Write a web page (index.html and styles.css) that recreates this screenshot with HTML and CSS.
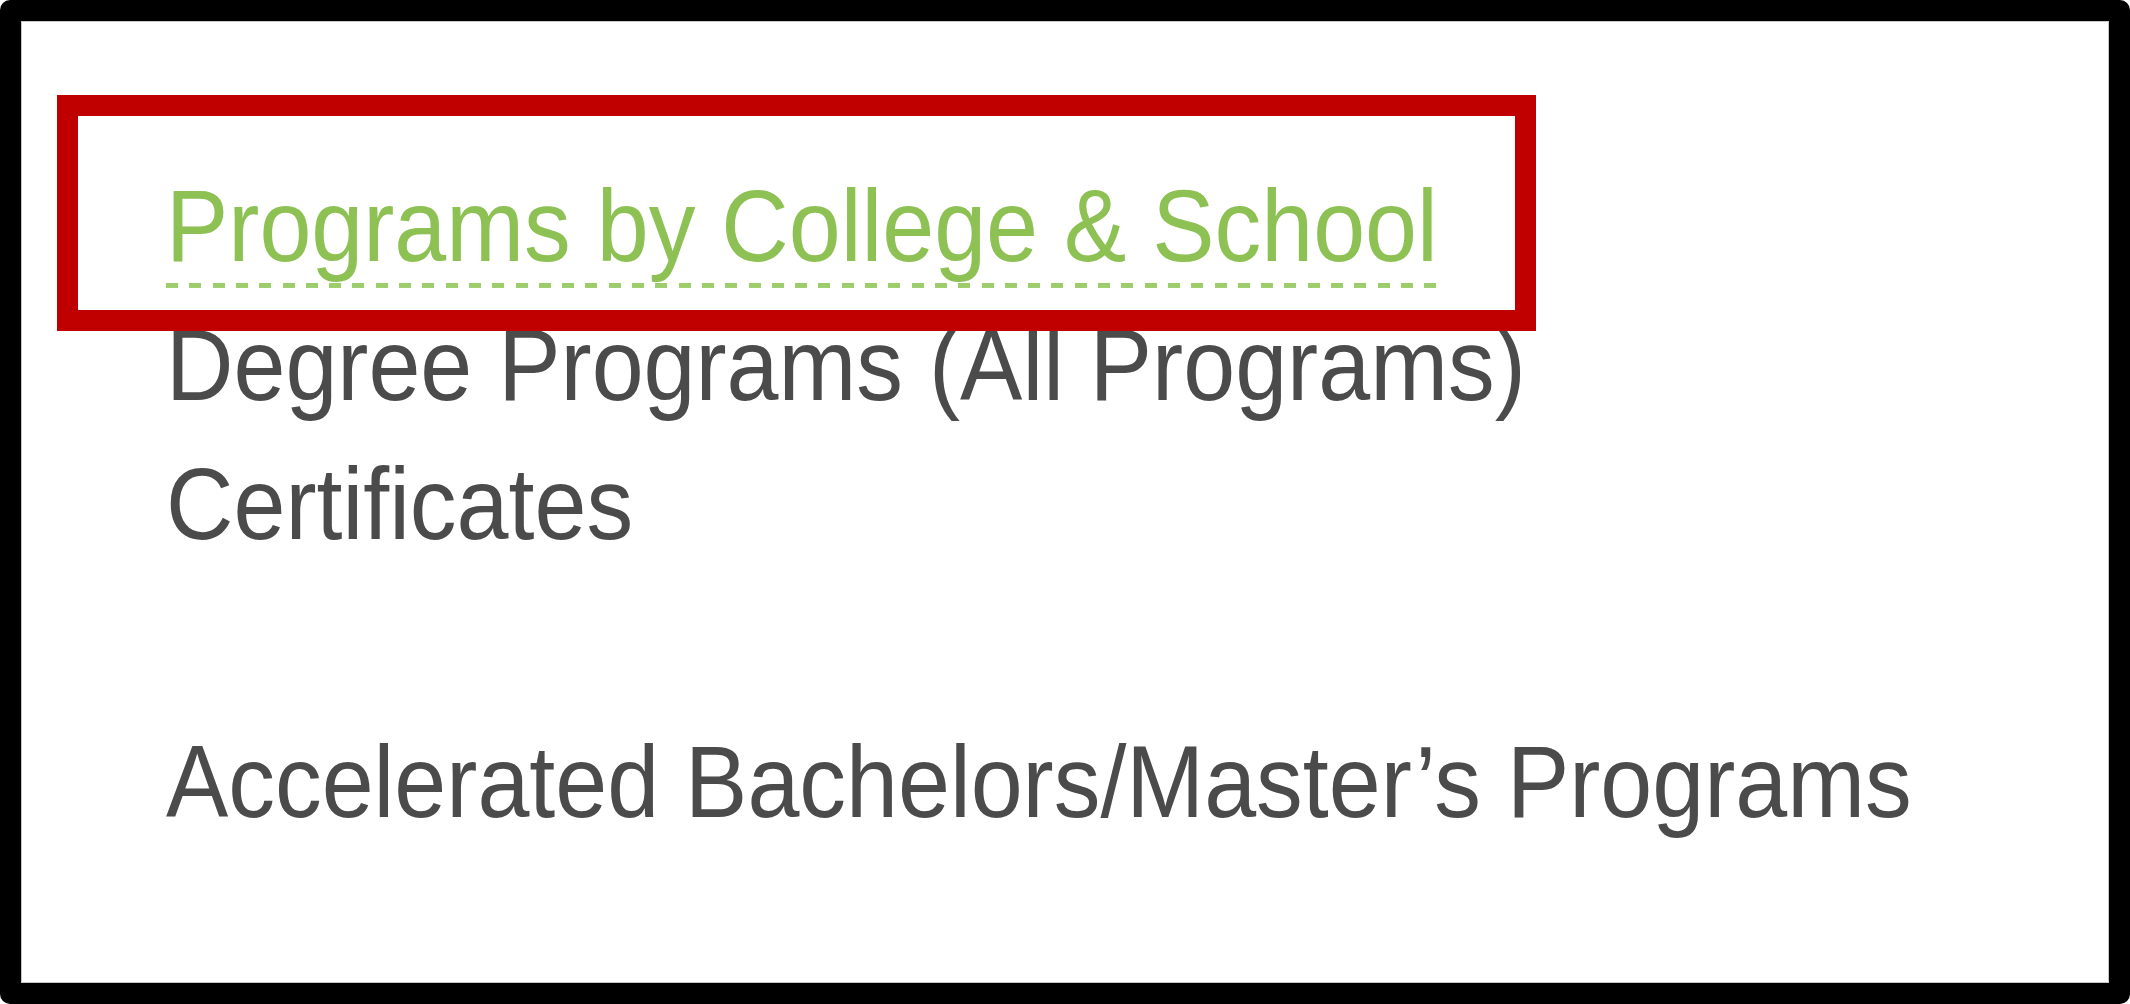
FILE: index.html
```html
<!DOCTYPE html>
<html lang="en">
<head>
<meta charset="utf-8">
<title>Programs</title>
<link rel="stylesheet" href="styles.css">
</head>
<body>
<div class="frame">
  <ul class="menu">
    <li><a class="menu-link active" href="#">Programs by College &amp; School</a></li>
    <li><a class="menu-link" href="#">Degree Programs (All Programs)</a></li>
    <li><a class="menu-link" href="#">Certificates</a></li>
    <li class="spacer"></li>
    <li><a class="menu-link" href="#">Accelerated Bachelors/Master’s Programs</a></li>
  </ul>
  <div class="highlight"></div>
</div>
</body>
</html>
```
FILE: styles.css
```css
html, body {
  margin: 0;
  padding: 0;
  background: #ffffff;
}

.frame {
  position: relative;
  box-sizing: border-box;
  width: 2130px;
  height: 1004px;
  border: 21px solid #000000;
  border-radius: 10px;
  box-shadow: inset 0 0 0 1px #c8c8c8;
  background: #ffffff;
  overflow: hidden;
}

.menu {
  list-style: none;
  margin: 0;
  padding: 138px 0 0 145px;
  font-family: "Liberation Sans", Arial, sans-serif;
  font-size: 93.4px;
  line-height: 139px;
}

.menu li {
  height: 139px;
  white-space: nowrap;
}

.menu-link {
  display: inline-block;
  height: 139px;
  vertical-align: top;
  color: #4b4b4b;
  text-decoration: none;
  transform: scaleY(1.1);
  transform-origin: 0 102px;
}

.menu-link.active {
  color: #8dc153;
  background-image: repeating-linear-gradient(to right, #9ccd6a 0 12px, transparent 12px 23.3px);
  background-size: 100% 4.5px;
  background-position: 0 122px;
  background-repeat: no-repeat;
}

.highlight {
  position: absolute;
  left: 36px;
  top: 74px;
  width: 1479px;
  height: 236px;
  box-sizing: border-box;
  border: 21px solid #c00000;
  pointer-events: none;
}
```
